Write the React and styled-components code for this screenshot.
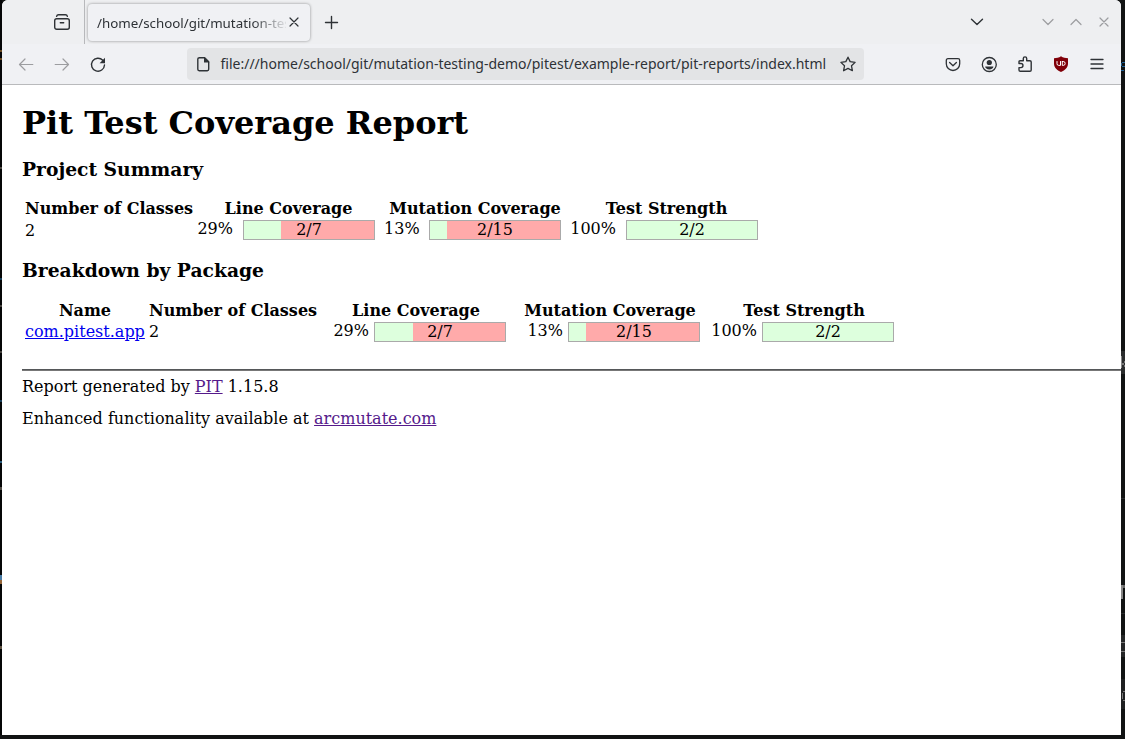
import React from "react";
import styled, { createGlobalStyle } from "styled-components";

const GlobalStyle = createGlobalStyle`
  html, body { margin: 0; padding: 0; overflow: hidden; }
  body { background: #111313; }
  *, *::before, *::after { box-sizing: border-box; }
`;

const Desktop = styled.div`
  width: 1125px;
  height: 739px;
  display: grid;
  grid-template-columns: 2px 1119px 4px;
  grid-template-rows: 735px 4px;
  overflow: hidden;
  background: #111313;
`;
const Edge = styled.div`
  position: relative;
  overflow: hidden;
  background: ${(p) => p.$tone};
`;
const Speck = styled.i`
  position: absolute;
  left: ${(p) => p.$x || 0}px;
  width: ${(p) => p.$w || 4}px;
  top: ${(p) => p.$y}px;
  height: ${(p) => p.$h || 2}px;
  background: ${(p) => p.$color};
`;
const Window = styled.div`
  display: flex;
  flex-direction: column;
  background: #fff;
  border-radius: 6px 6px 0 0;
  overflow: hidden;
`;

const TabBar = styled.div`
  flex: none;
  display: flex;
  height: 44px;
  background: #eeeff1;
  color: #2e3236;
`;
const ViewSlot = styled.div`
  width: 83px;
  padding: 14px 0 0 52px;
  border-right: 1px solid #b7b8bb;
`;
const Tab = styled.div`
  display: flex;
  align-items: center;
  width: 222px;
  height: 37px;
  margin: 4px 0 0 3px;
  padding: 0 8px 1px 9px;
  border-radius: 4px;
  background: #f0f1f4;
  box-shadow: 0 0 3px rgba(0, 0, 0, 0.42);
`;
const TabTitle = styled.span`
  width: 189px;
  overflow: hidden;
  white-space: nowrap;
  font: 13.33px/20px "Noto Sans", sans-serif;
  padding-top: 1px;
  mask-image: linear-gradient(to right, #000 155px, transparent 192px);
`;
const IconBox = styled.span`
  flex: none;
  width: 16px;
  height: 16px;
  color: ${(p) => (p.$dim ? "#9c9da0" : "#2e3236")};
  svg { display: block; overflow: visible; }
`;
const NewTab = styled.div`
  padding: 14px 0 0 14px;
`;
const WindowButtons = styled.div`
  display: flex;
  gap: 12px;
  margin-left: auto;
  padding: 14px 9px 0 0;
  ${IconBox}:first-child { margin-right: 43px; }
`;

const NavBar = styled.div`
  flex: none;
  display: flex;
  align-items: center;
  height: 41px;
  padding: 0 16px;
  border-bottom: 1px solid #b9babc;
  background: #f0f1f4;
`;
const NavGroup = styled.div`
  display: flex;
  gap: 20px;
  margin-left: ${(p) => p.$push || "0"};
`;
const UrlField = styled.div`
  display: flex;
  align-items: center;
  width: 677px;
  height: 32px;
  margin-left: 81px;
  padding: 0 8px;
  border-radius: 4px;
  background: #e3e4e6;
`;
const Url = styled.span`
  flex: 1;
  padding: 0 0 1px 9.5px;
  white-space: nowrap;
  color: #2e3236;
  font: 14px/19px "Noto Sans", sans-serif;
`;

const Page = styled.main`
  padding: 19px 0 0 20px;
  color: #000;
  font: 16px/19px "DejaVu Serif", serif;
`;
const Title = styled.h1`
  margin: 0;
  font-size: 32px;
  line-height: 38px;
`;
const Heading = styled.h3`
  margin: 16px 0 0;
  font-size: 18.72px;
  line-height: 22px;
`;
const Table = styled.div`
  display: grid;
  grid-template-columns: ${(p) => p.$columns};
  grid-template-rows: 19px 24px;
  column-gap: 4px;
  row-gap: 1px;
  margin: ${(p) => p.$top}px 0 0 3px;
  white-space: nowrap;
`;
const HeadCell = styled.div`
  text-align: center;
  font-weight: bold;
`;
const Cell = styled.div`
  padding-top: ${(p) => p.$top}px;
`;
const CoverageCell = styled.div`
  display: flex;
  justify-content: flex-end;
  gap: ${(p) => p.$gap}px;
  padding-right: 5px;
`;
const Bar = styled.div`
  flex: none;
  width: 132px;
  height: 20px;
  margin-top: 1px;
  border: 1px solid #aaa;
  text-align: center;
  line-height: 18px;
  background: linear-gradient(to right, #dfd ${(p) => p.$value}px, #faa ${(p) => p.$value}px);
`;
const Link = styled.a`
  color: ${(p) => (p.$visited ? "#551a8b" : "#0000ee")};
  text-decoration: underline;
`;
const Rule = styled.hr`
  height: 2px;
  margin: 24px 0 6px;
  border: 0;
  border-top: 1px solid #555759;
  background: #777;
`;
const Note = styled.p`
  margin: 0 0 13px;
`;

const SHAPES = {
  view: (
    <>
      <rect x="0.7" y="4.7" width="14.6" height="10.6" rx="2" />
      <path d="M2.6 2.4Q3 .7 4.5.7h7q1.500 0 1.900 1.700M6.300 8.700h3.400" />
    </>
  ),
  close: <path d="M4 4l8 8M12 4l-8 8" />,
  plus: <path d="M7.500 2.500v12M1.500 8.500h12" />,
  down: <path d="M2.500 5.200L8 10.500l5.500-5.300" />,
  smallDown: <path d="M3 5.500l5 5 5-5" />,
  smallUp: <path d="M3 10.500l5-5 5 5" />,
  windowClose: <path d="M4 4l8 8M12 4l-8 8" />,
  back: <path d="M14.800 8.500H1.500M7 3L1.500 8.500 7 14" />,
  forward: <path d="M1.200 8.500h13.300M9 3l5.500 5.500L9 14" />,
  reload: (
    <>
      <path d="M12.800 4.300A6.500 6.500 0 1 0 14.500 9" />
      <path d="M15 1.800v5.400H9.600z" fill="currentColor" stroke="none" />
    </>
  ),
  file: (
    <>
      <path d="M4.500 1.700h5.200l4 4v7.600q0 1.400-1.400 1.400H4.200q-1.400 0-1.400-1.400V3.100q0-1.400 1.700-1.400z" />
      <path d="M9 1v5.500h5.500z" fill="currentColor" stroke="none" />
    </>
  ),
  star: <path d="M8 1.200l2.150 4.450 4.950.7-3.600 3.450.9 4.900L8 12.350 3.600 14.700l.9-4.900L.9 6.350l4.950-.7z" />,
  pocket: (
    <>
      <path d="M3 2.700h10q1.700 0 1.700 1.700v3.400a6.700 6.700 0 0 1-13.400 0V4.400q0-1.700 1.700-1.700z" />
      <path d="M4.600 6.500L8 9.700l3.400-3.200" />
    </>
  ),
  account: (
    <>
      <circle cx="8.300" cy="8.500" r="7" />
      <circle cx="8.300" cy="6.500" r="2.600" fill="currentColor" stroke="none" />
      <path d="M4.200 10.400h8.200c0 1.600-1.700 3-4.100 3s-4.100-1.400-4.100-3z" fill="currentColor" stroke="none" />
    </>
  ),
  puzzle: (
    <path d="M2 7.500V5.700q0-1 1-1h3.300V2.600a1.700 1.700 0 0 1 3.400 0v2.100h3.200q1.300 0 1.300 1.300v8q0 1.300-1.300 1.300H3.300q-1.300 0-1.300-1.300v-2.400h1.900a2.050 2.050 0 0 0 0-4.100H2" />
  ),
  shield: (
    <>
      <path d="M8 .3c2.200 1.400 4.500 1.900 7 2v5.200c0 4-2.800 6.500-7 8.500-4.200-2-7-4.500-7-8.500V2.300C3.500 2.200 5.800 1.700 8 .3z" fill="#800009" stroke="none" />
      <path d="M4 5.500v2.200q0 1.700 1.700 1.700h1.800V5.500M9.300 5.500v3.900h.9a1.950 1.950 0 0 0 0-3.900h-.9" stroke="#fff" strokeWidth="1" />
    </>
  ),
  menu: <path d="M2 3.500h12M2 8h12M2 12.500h12" />,
};

function Icon({ name, dim, weight = 1.4 }) {
  return (
    <IconBox $dim={dim}>
      <svg width="16" height="16" viewBox="0 0 16 16" fill="none" stroke="currentColor" strokeWidth={weight} strokeLinecap="round" strokeLinejoin="round">
        {SHAPES[name]}
      </svg>
    </IconBox>
  );
}

function Coverage({ percent, ratio, fill, gap }) {
  return (
    <CoverageCell $gap={gap}>
      <span>{percent}%</span>
      <Bar $value={fill}>{ratio}</Bar>
    </CoverageCell>
  );
}

const METRICS = [
  { title: "Line Coverage", percent: 29, ratio: "2/7", fill: 38 },
  { title: "Mutation Coverage", percent: 13, ratio: "2/15", fill: 17 },
  { title: "Test Strength", percent: 100, ratio: "2/2", fill: 130 },
];

const SUMMARY = METRICS.map((m) => (m.percent === 29 ? { ...m, fill: 37 } : m));

function CoverageTable({ columns, gap, name, top, metrics }) {
  return (
    <Table $columns={columns} $top={top}>
      {name && <HeadCell>Name</HeadCell>}
      <HeadCell>Number of Classes</HeadCell>
      {metrics.map((m) => <HeadCell key={m.title}>{m.title}</HeadCell>)}
      {name && <Cell $top={1}><Link>{name}</Link></Cell>}
      <Cell $top={name ? 1 : 2}>2</Cell>
      {metrics.map((m) => (
        <Coverage key={m.title} {...m} gap={!name && m.percent === 13 ? gap - 0.6 : gap} />
      ))}
    </Table>
  );
}

export default function App() {
  return (
    <>
      <GlobalStyle />
      <Desktop>
        <Edge $tone="#050607">
          <Speck $y={50} $color="#6b4a20" />
          <Speck $y={58} $color="#6b4a20" />
          <Speck $y={167} $color="#4b4842" />
          <Speck $y={278} $color="#173e58" />
          <Speck $y={305} $color="#45423d" />
          <Speck $y={351} $color="#45423d" />
          <Speck $y={400} $color="#173e58" />
          <Speck $y={461} $color="#285b7c" />
          <Speck $y={487} $color="#4f4b45" $h={3} />
          <Speck $y={575} $color="#477ba5" $h={5} />
          <Speck $y={580} $color="#926438" $h={4} />
          <Speck $y={646} $color="#5d5242" $h={3} />
        </Edge>
        <Window>
          <TabBar>
            <ViewSlot><Icon name="view" /></ViewSlot>
            <Tab>
              <TabTitle>/home/school/git/mutation-testing</TabTitle>
              <Icon name="close" weight={1.2} />
            </Tab>
            <NewTab><Icon name="plus" /></NewTab>
            <WindowButtons>
              <Icon name="down" />
              <Icon name="smallDown" dim weight={1.2} />
              <Icon name="smallUp" dim weight={1.2} />
              <Icon name="windowClose" dim weight={1.2} />
            </WindowButtons>
          </TabBar>
          <NavBar>
            <NavGroup>
              <Icon name="back" dim weight={1.2} />
              <Icon name="forward" dim weight={1.2} />
              <Icon name="reload" />
            </NavGroup>
            <UrlField>
              <Icon name="file" />
              <Url>file:///home/school/git/mutation-testing-demo/pitest/example-report/pit-reports/index.html</Url>
              <Icon name="star" weight={1.3} />
            </UrlField>
            <NavGroup $push="auto">
              <Icon name="pocket" weight={1.3} />
              <Icon name="account" weight={1.3} />
              <Icon name="puzzle" />
              <Icon name="shield" />
              <Icon name="menu" weight={1.3} />
            </NavGroup>
          </NavBar>
          <Page>
            <Title>Pit Test Coverage Report</Title>
            <Heading>Project Summary</Heading>
            <CoverageTable columns="168px 183px 182px 193px" gap={10} top={19} metrics={SUMMARY} />
            <Heading>Breakdown by Package</Heading>
            <CoverageTable columns="120px 168px 190px 190px 190px" gap={5} top={20} metrics={METRICS} name="com.pitest.app" />
            <Rule />
            <Note>Report generated by <Link $visited>PIT</Link> 1.15.8</Note>
            <Note>Enhanced functionality available at <Link $visited>arcmutate.com</Link></Note>
          </Page>
        </Window>
        <Edge $tone="#111313">
          <Speck $x={1} $w={3} $y={62} $color="#1d5f96" $h={1} />
          <Speck $w={1} $y={63} $color="#1d5f96" $h={3} />
          <Speck $x={1} $w={3} $y={66} $color="#1d5f96" $h={1} />
          <Speck $w={3} $y={70} $color="#1d5f96" $h={1} />
          <Speck $y={351} $color="#2a2c2d" $h={23} />
          <Speck $w={1} $y={356} $color="#888" $h={12} />
          <Speck $x={1} $w={2} $y={363} $color="#777" $h={2} />
          <Speck $x={3} $w={1} $y={361} $color="#777" $h={2} />
          <Speck $x={3} $w={1} $y={365} $color="#777" $h={2} />
          <Speck $y={498} $color="#292b2c" $h={1} />
          <Speck $w={2} $y={585} $color="#858585" $h={14} />
          <Speck $x={2} $w={2} $y={585} $color="#666" $h={3} />
          <Speck $y={613} $color="#292b2c" $h={1} />
          <Speck $y={635} $color="#242627" $h={22} />
          <Speck $y={642} $color="#777" $h={1} />
          <Speck $y={651} $color="#777" $h={1} />
          <Speck $y={679} $color="#1e2021" $h={30} />
          <Speck $x={1} $w={1} $y={693} $color="#777" $h={6} />
          <Speck $x={2} $w={2} $y={691} $color="#777" $h={1} />
          <Speck $x={2} $w={2} $y={700} $color="#777" $h={1} />
        </Edge>
      </Desktop>
    </>
  );
}
